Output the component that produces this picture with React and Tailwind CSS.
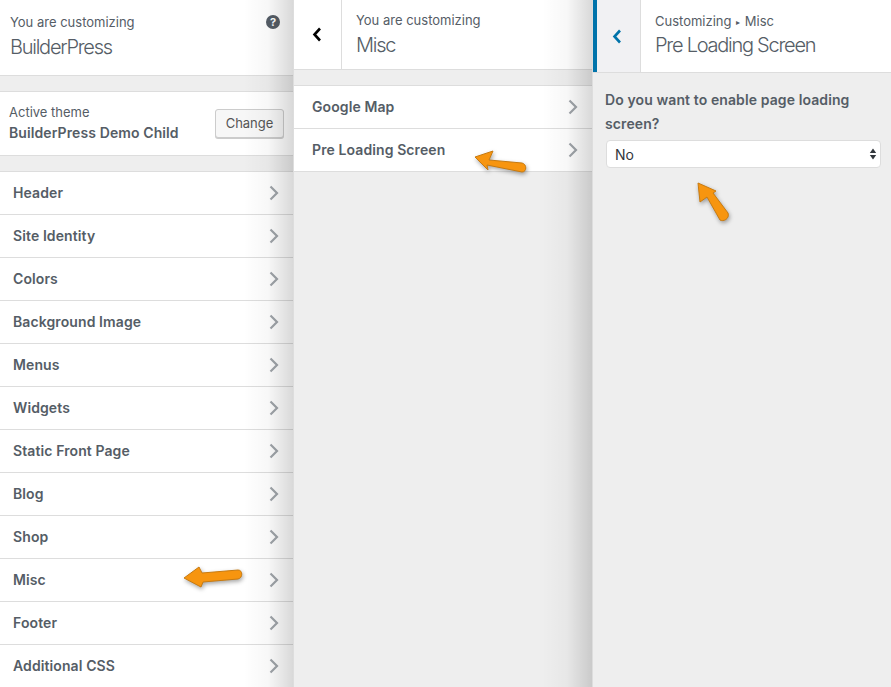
import React from 'react';

const sans = 'font-["Inter","Noto_Sans",sans-serif]';

const Chevron = () => (
  <svg width="10" height="16" viewBox="0 0 10 16" fill="none" className="shrink-0">
    <path d="M1.5 1.5 L8 8 L1.5 14.5" stroke="#a0a5aa" strokeWidth="2.2" />
  </svg>
);

// the three hand drawn orange arrows, in page coordinates
const Arrows = () => (
  <svg width="891" height="687" viewBox="0 0 891 687" className="pointer-events-none absolute left-0 top-0">
    <g fill="#f7950f" stroke="#c77a10" strokeWidth="1" strokeLinejoin="round" style={{ filter: 'drop-shadow(1px 2px 2px rgba(0,0,0,.35))' }}>
      <path d="M184 578 L199 567 L202 573 L238 570 C243 570 243 578 238 579 L203 582 L201 587 Z" />
      <path d="M475 157 L493 151 L489 160 L522 163 C527 164 527 172 522 172 L487 165 L488 170 Z" />
      <path d="M698 183 L716 191 L713 193 L728 213 C730 219 723 222 720 220 L707 197 L700 202 Z" />
    </g>
  </svg>
);

const Row = ({ label, pad = 'pl-[13px]' }) => (
  <div className={`flex h-[43px] items-center justify-between border-b border-[#ddd] bg-white pr-[14px] ${pad}`}>
    <span className="-mt-[2px] text-[14px] font-semibold tracking-[0.1px] text-[#555d66]">{label}</span>
    <Chevron />
  </div>
);

const Shade = () => (
  <div className="pointer-events-none absolute inset-y-0 right-0 w-[50px] bg-gradient-to-r from-black/0 via-black/3 to-black/15" />
);

const items = ['Header', 'Site Identity', 'Colors', 'Background Image', 'Menus', 'Widgets', 'Static Front Page', 'Blog', 'Shop', 'Misc', 'Footer', 'Additional CSS'];

export default function App() {
  return (
    <div className={`relative flex h-[687px] w-[891px] overflow-hidden bg-[#eee] ${sans}`}>
      <div className="relative w-[294px] shrink-0 border-r border-[#ddd]">
        <div className="flex h-[76px] items-start justify-between border-b border-[#ddd] bg-white pl-[10px] pr-[13px] pt-[14px]">
          <div>
            <div className="text-[13px] leading-[17px] text-[#555d66]">You are customizing</div>
            <div className="mt-[3px] text-[20px] font-light leading-[26px] tracking-[-1.25px] text-[#555d66]">BuilderPress</div>
          </div>
          <svg width="14" height="14" viewBox="0 0 14 14" className="mt-[1px]">
            <circle cx="7" cy="7" r="7" fill="#555d66" />
            <text x="7" y="11" textAnchor="middle" fontSize="11" fontWeight="700" fill="#fff">?</text>
          </svg>
        </div>
        <div className="mt-[15px] flex h-[65px] items-center justify-between border-y border-[#ddd] bg-white pl-[9px] pr-[9px]">
          <div className="-mt-[2px]">
            <div className="text-[13px] leading-[20px] text-[#555d66]">Active theme</div>
            <div className="text-[14px] font-semibold leading-[22px] tracking-[0.1px] text-[#555d66]">BuilderPress Demo Child</div>
          </div>
          <button className="h-[29px] w-[69px] rounded-[3px] border border-[#ccc] bg-[#f7f7f7] text-[13px] text-[#555] shadow-[0_1px_0_#ccc]">Change</button>
        </div>
        <div className="mt-[15px] border-t border-[#ddd]">
          {items.map((item) => (
            <Row key={item} label={item} />
          ))}
        </div>
        <Shade />
      </div>

      <div className="relative w-[299px] shrink-0 border-r border-[#ddd]">
        <div className="flex h-[70px] border-b border-[#ddd] bg-white">
          <div className="flex w-[48px] items-center justify-center border-r border-[#ddd] pr-[2px]">
            <svg width="10" height="15" viewBox="0 0 10 15" fill="none">
              <path d="M8 1.5 L2.5 7.5 L8 13.5" stroke="#000" strokeWidth="2.6" />
            </svg>
          </div>
          <div className="pl-[14px] pt-[12px]">
            <div className="text-[13px] leading-[17px] text-[#555d66]">You are customizing</div>
            <div className="mt-[3px] text-[20px] font-light leading-[26px] tracking-[-1.25px] text-[#555d66]">Misc</div>
          </div>
        </div>
        <div className="mt-[15px] border-t border-[#ddd]">
          <Row label="Google Map" pad="pl-[18px]" />
          <Row label="Pre Loading Screen" pad="pl-[18px]" />
        </div>
        <Shade />
      </div>

      <div className="relative min-w-0 flex-1">
        <div className="flex h-[73px] border-b border-[#ddd] bg-white">
          <div className="flex w-[48px] items-center justify-center border-l-[4px] border-r border-l-[#0073aa] border-r-[#ddd] bg-[#f1f1f3] pr-[3px]">
            <svg width="10" height="15" viewBox="0 0 10 15" fill="none">
              <path d="M8 1.5 L2.5 7.5 L8 13.5" stroke="#0073aa" strokeWidth="2.6" />
            </svg>
          </div>
          <div className="pl-[14px] pt-[13px]">
            <div className="text-[13px] leading-[17px] text-[#555d66]">Customizing <span className="px-[1px] text-[8px] align-[1px]">▸</span> Misc</div>
            <div className="mt-[1px] text-[20px] font-light leading-[27px] tracking-[-1.25px] text-[#555d66]">Pre Loading Screen</div>
          </div>
        </div>
        <div className="px-[12px] pt-[15px]">
          <div className="text-[14px] font-semibold leading-[24px] tracking-[0.1px] text-[#555d66]">Do you want to enable page loading screen?</div>
          <div className="ml-px mt-[4px] flex h-[28px] w-[275px] items-center justify-between rounded-[4px] border border-[#ddd] bg-white pl-[8px] pr-[3px] text-[14px] text-[#32373c]">
            <span>No</span>
            <svg width="8" height="12" viewBox="0 0 8 12">
              <path d="M4 0.5 L7.2 5 H0.8 Z M4 11.5 L7.2 7 H0.8 Z" fill="#32373c" />
            </svg>
          </div>
        </div>
      </div>
      <Arrows />
    </div>
  );
}
